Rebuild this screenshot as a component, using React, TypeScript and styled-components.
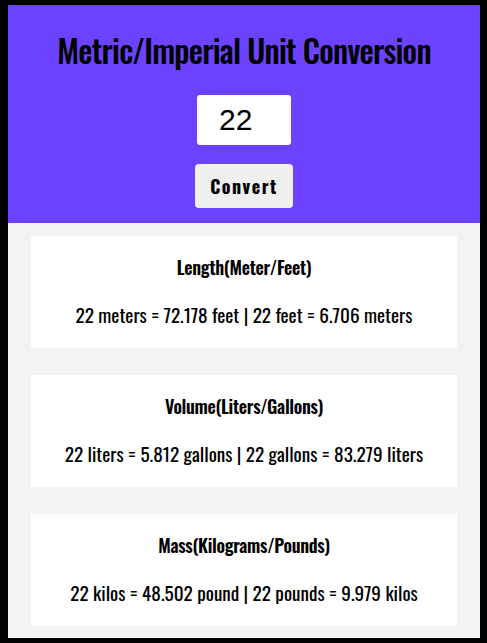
import React, { useState } from "react";
import styled, { createGlobalStyle } from "styled-components";

const Global = createGlobalStyle`
  html, body { margin: 0; padding: 0; background: #000; }
  body { padding: 5px 7px 5px 8px; }
  * { box-sizing: border-box; }
`;

const CONDENSED = `"Oswald", "Liberation Sans Narrow", "DejaVu Sans Condensed", "Arial Narrow", sans-serif`;

const Frame = styled.div`
  width: 472px;
  height: 633px;
  display: flex;
  flex-direction: column;
  background: #f3f3f3;
  font-family: ${CONDENSED};
`;

const Header = styled.header`
  background: #6b43ff;
  height: 219px;
  display: flex;
  flex-direction: column;
  align-items: center;
  padding-top: 25px;
`;

const Title = styled.h1`
  margin: 0;
  font-size: 32px;
  font-weight: 500;
  letter-spacing: -0.8px;
  line-height: 40px;
  color: #000;
`;

const NumberInput = styled.input`
  margin-top: 25px;
  width: 94px;
  height: 50px;
  border: none;
  border-radius: 3px;
  background: #fff;
  font-family: "Liberation Sans", Arial, sans-serif;
  font-size: 30px;
  padding: 0 0 0 22px;
  color: #000;
  outline: none;
`;

const ConvertButton = styled.button`
  margin-top: 19px;
  width: 98px;
  height: 44px;
  border: none;
  border-radius: 4px;
  background: #efefef;
  font-family: ${CONDENSED};
  font-weight: 700;
  font-size: 18px;
  letter-spacing: 1.5px;
  color: #000;
`;

const Results = styled.main`
  flex: 1;
  display: flex;
  flex-direction: column;
  gap: 27px;
  padding: 13px 23px 12px 23px;
`;

const Card = styled.section`
  height: 112px;
  background: #fff;
  display: flex;
  flex-direction: column;
  align-items: center;
  padding-top: 18px;
`;

const CardTitle = styled.h2`
  margin: 0;
  font-size: 18px;
  font-weight: 600;
  letter-spacing: -0.3px;
  line-height: 26px;
  color: #000;
`;

const CardText = styled.p`
  margin: 21px 0 0;
  font-size: 19.2px;
  line-height: 28px;
  color: #000;
`;

const fmt = (n: number) => String(Math.round(n * 1000) / 1000);

export default function App() {
  const [value, setValue] = useState("22");
  const v = Number(value) || 0;
  const rows = [
    {
      title: "Length(Meter/Feet)",
      text: `${value} meters = ${fmt(v * 3.28084)} feet | ${value} feet = ${fmt(v * 0.3048)} meters`,
    },
    {
      title: "Volume(Liters/Gallons)",
      text: `${value} liters = ${fmt(v * 0.264172)} gallons | ${value} gallons = ${fmt(v * 3.7854)} liters`,
    },
    {
      title: "Mass(Kilograms/Pounds)",
      text: `${value} kilos = ${fmt(v * 2.20462)} pound | ${value} pounds = ${fmt(v * 0.453592)} kilos`,
    },
  ];
  return (
    <>
      <Global />
      <Frame>
        <Header>
          <Title>Metric/Imperial Unit Conversion</Title>
          <NumberInput value={value} onChange={(e) => setValue(e.target.value)} />
          <ConvertButton>Convert</ConvertButton>
        </Header>
        <Results>
          {rows.map((r) => (
            <Card key={r.title}>
              <CardTitle>{r.title}</CardTitle>
              <CardText>{r.text}</CardText>
            </Card>
          ))}
        </Results>
      </Frame>
    </>
  );
}
